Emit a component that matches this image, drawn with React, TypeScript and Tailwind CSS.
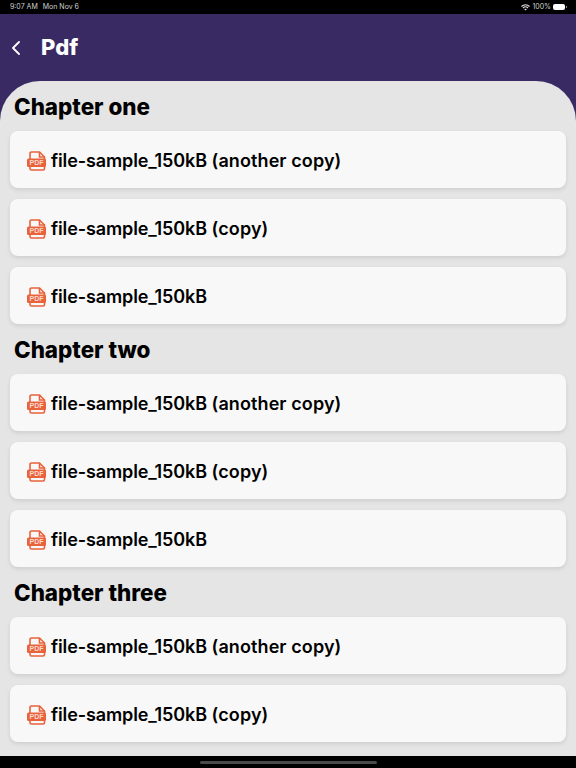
import React from "react";

const files = [
  { name: "file-sample_150kB", suffix: "(another copy)" },
  { name: "file-sample_150kB", suffix: "(copy)" },
  { name: "file-sample_150kB", suffix: "" },
];

const chapters = [
  { title: "Chapter one", items: files },
  { title: "Chapter two", items: files },
  { title: "Chapter three", items: files.slice(0, 2) },
];

function PdfIcon() {
  return (
    <svg width="20" height="20" viewBox="0 0 20 20" className="shrink-0" fill="none">
      <path d="M3 8V2.500A1.500 1.500 0 0 1 4.500 1H12.500l5 5v11.500a1.500 1.500 0 0 1-1.500 1.500H4.500A1.500 1.500 0 0 1 3 17.500V16" stroke="#e8623a" strokeWidth="1.600" />
      <path d="M12.500 1v5h5" stroke="#e8623a" strokeWidth="1.600" />
      <rect x="0" y="7.500" width="19" height="8.500" rx="1.500" fill="#e8623a" />
      <text x="9.500" y="14.300" textAnchor="middle" fontSize="7" fontWeight="700" fill="#fbd9cc" fontFamily="Liberation Sans, sans-serif">PDF</text>
    </svg>
  );
}

function FileRow({ name, suffix }: { name: string; suffix: string }) {
  return (
    <div className="flex h-[57px] items-center gap-[4px] rounded-lg bg-[#f8f8f8] pl-[17px] pt-[2px] shadow-[0_2px_4px_rgba(0,0,0,0.1)]">
      <PdfIcon />
      <span className="whitespace-pre text-[18px] font-semibold text-black">
        <span className="tracking-[-0.12px]">{name}</span>
        {suffix && <span className="tracking-[0.1px]"> {suffix}</span>}
      </span>
    </div>
  );
}

export default function App() {
  return (
    <div className="flex h-[768px] w-[576px] flex-col overflow-hidden bg-black font-['Inter',sans-serif]">
      <div className="flex h-[14px] shrink-0 items-center justify-between pl-[10px] pr-[9px] text-[7px] text-[#cfcfcf]">
        <div className="flex gap-[5px]">
          <span>9:07 AM</span>
          <span>Mon Nov 6</span>
        </div>
        <div className="flex items-center gap-[2px]">
          <svg width="9" height="7" viewBox="0 0 18 14" fill="none" stroke="#e5e5e5" strokeWidth="2.200">
            <path d="M1 5c4.500-4.500 11.500-4.500 16 0" />
            <path d="M4 8c3-3 7-3 10 0" />
            <path d="M9 13 6.500 10.500c1.500-1.300 3.500-1.300 5 0Z" fill="#e5e5e5" stroke="none" />
          </svg>
          <span>100%</span>
          <div className="flex items-center gap-[1px]">
            <div className="h-[6px] w-[12px] rounded-[2px] bg-white" />
            <div className="h-[2px] w-[1px] bg-[#8a8a8a]" />
          </div>
        </div>
      </div>

      <div className="flex min-h-0 flex-1 flex-col bg-[#3a2a63]">
        <div className="flex h-[67px] shrink-0 items-center pl-[12px] text-white">
          <svg width="8" height="14" viewBox="0 0 8 14" fill="none" stroke="white" strokeWidth="1.800" strokeLinecap="round" strokeLinejoin="round">
            <path d="M7 1 1 7l6 6" />
          </svg>
          <span className="ml-[21px] text-[22px] font-extrabold">Pdf</span>
        </div>

        <div className="min-h-0 flex-1 overflow-hidden rounded-t-[40px] bg-[#e5e5e5] px-[10px]">
          {chapters.map((c) => (
            <div key={c.title}>
              <div className="flex h-[50px] items-center pl-[4px] pt-[2px] text-[22.4px] font-extrabold leading-none text-black">{c.title}</div>
              <div className="flex flex-col gap-[11px]">
                {c.items.map((f) => (
                  <FileRow key={f.name + f.suffix} name={f.name} suffix={f.suffix} />
                ))}
              </div>
            </div>
          ))}
        </div>
      </div>

      <div className="flex h-[12px] shrink-0 items-center justify-center">
        <div className="h-[3px] w-[177px] rounded-full bg-[#4a4a4a]" />
      </div>
    </div>
  );
}
